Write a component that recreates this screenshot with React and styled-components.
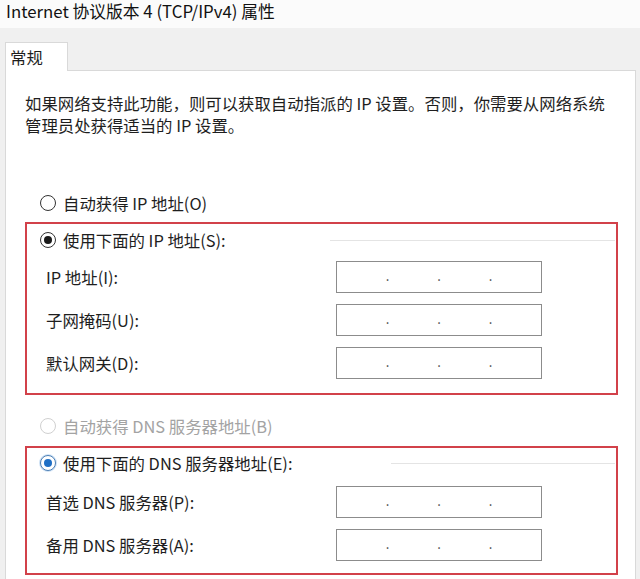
import React from 'react'
import styled, { createGlobalStyle } from 'styled-components'

const Global = createGlobalStyle`
    html, body {
        margin: 0;
        padding: 0;
        background: #f0f0f0;
    }
    body {
        font-family: "Noto Sans CJK SC", "Noto Sans", sans-serif;
        color: #1e1e1e;
    }
`

const Window = styled.div`
    width: 640px;
    height: 579px;
    overflow: hidden;
    background: #f0f0f0;
`

const TitleBar = styled.div`
    height: 28px;
    background: #fbfbfb;
    padding-left: 6px;
    font-size: 16.8px;
    line-height: 22px;
    color: #111;
`

const Tabs = styled.div`
    display: flex;
    padding: 14px 0 0 5px;
    height: 28px;
`

const Tab = styled.div`
    width: 63px;
    box-sizing: border-box;
    background: #fff;
    border: 1px solid #d9d9d9;
    border-bottom: none;
    padding-left: 4px;
    font-size: 16.4px;
    line-height: 28px;
    position: relative;
    z-index: 1;
    height: 29px;
`

const Panel = styled.div`
    margin-left: 5px;
    width: 631px;
    height: 520px;
    box-sizing: border-box;
    background: #fff;
    border: 1px solid #d9d9d9;
    padding: 21px 0 0 19px;
`

const Intro = styled.p`
    margin: 0;
    width: 590px;
    font-size: 16.4px;
    line-height: 22px;
`

const Option = styled.label`
    display: flex;
    align-items: center;
    height: 22px;
    padding-left: ${p => p.$indent}px;
    margin-top: ${p => p.$top || 0}px;
    font-size: 16.4px;
    color: ${p => (p.$disabled ? '#a3a3a3' : '#1e1e1e')};
`

const Radio = styled.span`
    width: 16px;
    height: 16px;
    box-sizing: border-box;
    border-radius: 50%;
    border: 1px solid ${p => (p.$disabled ? '#d0d0d0' : p.$accent ? '#4d7fb4' : '#333')};
    display: inline-flex;
    align-items: center;
    justify-content: center;
    margin-right: 7px;
    flex: none;
    background: #fff;
    box-shadow: ${p => (p.$accent ? '0 0 0 1px #cfe2f5' : 'none')};

    &::after {
        content: '';
        display: ${p => (p.$checked ? 'block' : 'none')};
        width: 8px;
        height: 8px;
        border-radius: 50%;
        background: ${p => (p.$accent ? '#1f6fc5' : '#1a1a1a')};
    }
`

const GroupLine = styled.span`
    flex: 1;
    height: 1px;
    background: #e4e4e4;
    margin-left: ${p => p.$gap}px;
    margin-right: 1px;
`

const Marked = styled.section`
    width: 593px;
    box-sizing: border-box;
    border: 2px solid #d2414a;
    margin-top: ${p => p.$top}px;
    padding: ${p => p.$padTop}px 0 ${p => p.$padBottom}px 11px;
`

const Fields = styled.div`
    display: grid;
    grid-template-columns: 290px 206px;
    row-gap: 11px;
    margin-top: ${p => p.$top}px;
    padding-left: 8px;
`

const FieldLabel = styled.span`
    display: flex;
    align-items: center;
    font-size: 16.4px;
`

const IpBox = styled.div`
    height: 32px;
    box-sizing: border-box;
    border: 1px solid #8c8c8c;
    display: flex;
    align-items: center;
    padding: 0 1px;
    background: #fff;
`

const Octet = styled.span`
    flex: 1;
`

const Dot = styled.span`
    width: 4px;
    text-align: center;
    font-size: 13px;
    line-height: 1;
    color: #444;
    margin-top: -4px;
`

const AddressInput = () => (
    <IpBox>
        <Octet /><Dot>.</Dot><Octet /><Dot>.</Dot><Octet /><Dot>.</Dot><Octet />
    </IpBox>
)

const App = () => {
    return (
        <Window>
            <Global />
            <TitleBar>Internet 协议版本 4 (TCP/IPv4) 属性</TitleBar>
            <Tabs>
                <Tab>常规</Tab>
            </Tabs>
            <Panel>
                <Intro>
                    如果网络支持此功能，则可以获取自动指派的 IP 设置。否则，你需要从网络系统管理员处获得适当的 IP 设置。
                </Intro>

                <Option $indent={15} $top={56}>
                    <Radio />自动获得 IP 地址(O)
                </Option>

                <Marked $top={8} $padTop={5} $padBottom={14}>
                    <Option $indent={2}>
                        <Radio $checked />使用下面的 IP 地址(S):
                        <GroupLine $gap={104} />
                    </Option>
                    <Fields $top={10}>
                        <FieldLabel>IP 地址(I):</FieldLabel>
                        <AddressInput />
                        <FieldLabel>子网掩码(U):</FieldLabel>
                        <AddressInput />
                        <FieldLabel>默认网关(D):</FieldLabel>
                        <AddressInput />
                    </Fields>
                </Marked>

                <Option $indent={15} $top={20} $disabled>
                    <Radio $disabled />自动获得 DNS 服务器地址(B)
                </Option>

                <Marked $top={9} $padTop={4} $padBottom={12}>
                    <Option $indent={2}>
                        <Radio $checked $accent />使用下面的 DNS 服务器地址(E):
                        <GroupLine $gap={99} />
                    </Option>
                    <Fields $top={12}>
                        <FieldLabel>首选 DNS 服务器(P):</FieldLabel>
                        <AddressInput />
                        <FieldLabel>备用 DNS 服务器(A):</FieldLabel>
                        <AddressInput />
                    </Fields>
                </Marked>
            </Panel>
        </Window>
    )
}

export default App
